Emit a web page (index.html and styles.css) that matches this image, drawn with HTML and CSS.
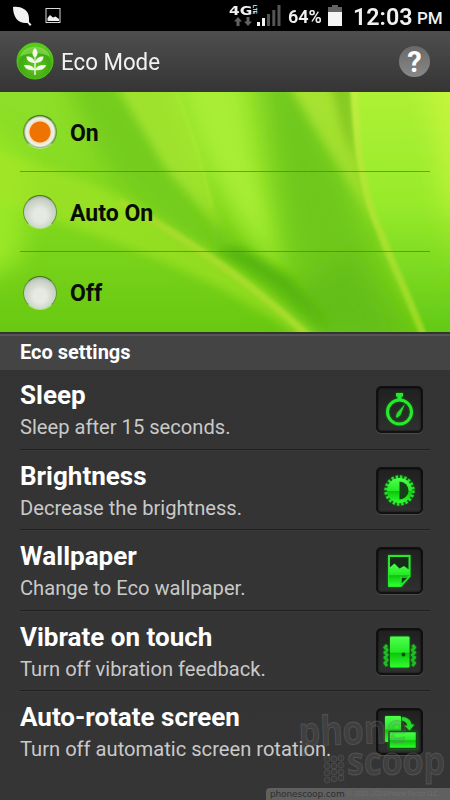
FILE: index.html
```html
<!DOCTYPE html>
<html lang="en">
<head>
<meta charset="utf-8">
<title>Eco Mode</title>
<link rel="stylesheet" href="styles.css">
</head>
<body>
<svg class="defs" width="0" height="0">
  <defs>
    <linearGradient id="neon" x1="0" y1="0" x2="0" y2="1"><stop offset="0" stop-color="#4dff4d"/><stop offset=".5" stop-color="#25ea25"/><stop offset=".54" stop-color="#0cc60c"/><stop offset="1" stop-color="#30ff30"/></linearGradient>
  </defs>
</svg>
<main class="screen">
  <header class="status">
    <svg class="leaf" width="22" height="22" viewBox="0 0 22 22"><path d="M2 2C9 1 16 4 17.500 10C18.300 14 18 15 18 17L20.500 19.500L19 21L16.500 18C8 19 2 13 2 2Z" fill="#f2f2f2"/></svg>
    <svg class="picture" width="16" height="17" viewBox="0 0 16 17"><rect x="1" y="1.500" width="14" height="14" fill="none" stroke="#d8d8d8"/><path d="M2.500 14V11L5 8L8 10.500L10.500 9.500L14 12V14Z" fill="#eee"/></svg>
    <div class="network">
      <span class="gen">4G</span><span class="lte">LTE</span>
      <svg class="arrows" width="18" height="10" viewBox="0 0 18 10"><path d="M4 0L8 4.500H5.500V9H2.500V4.500H0ZM12.500 0H15.500V4.500H18L14 9L10 4.500H12.500Z" fill="#626262"/></svg>
    </div>
    <svg class="signal" width="24" height="22" viewBox="0 0 24 22"><path d="M0 17H3V21H0ZM5 13H8V21H5Z" fill="#f4f4f4"/><path d="M10 9H13V21H10ZM15.300 5H18.300V21H15.300ZM20.500 0H23.500V21H20.500Z" fill="#555"/></svg>
    <span class="percent">64%</span>
    <svg class="battery" width="14" height="21" viewBox="0 0 14 21"><path d="M4 0H10V2H14V8H0V2H4Z" fill="#636363"/><path d="M0 7H14V21H0Z" fill="#f4f4f4"/></svg>
    <span class="clock">12:03</span><span class="pm">PM</span>
  </header>
  <nav class="bar">
    <svg class="logo" width="38" height="38" viewBox="0 0 38 38">
      <defs><radialGradient id="lg" cx=".5" cy=".65" r=".6"><stop offset="0" stop-color="#65c51e"/><stop offset=".7" stop-color="#3fab12"/><stop offset="1" stop-color="#56cf19"/></radialGradient></defs>
      <circle cx="19" cy="19" r="18" fill="url(#lg)" stroke="#55c81b"/>
      <path d="M4 15C7 1 31 1 34 15C27 10 11 10 4 15Z" fill="#b8ef78" opacity=".45"/>
      <path d="M19 6C22.500 9 22 13 19.500 15.500V20C20 16.500 23 14 27.500 14.500C27.500 18 25 20.500 19.700 21V27C21 23.500 25 22.500 30 23C29 27 25 28.800 19.700 28V33H18.300V28C13 28.800 9 27 8 23C13 22.500 17 23.500 18.300 27V21C13 20.500 10.500 18 10.500 14.500C15 14 18 16.500 18.500 20V15.500C16 13 15.500 9 19 6Z" fill="#f1faea"/>
    </svg>
    <h1 class="title">Eco Mode</h1>
    <span class="help">?</span>
  </nav>
  <section class="modes">
    <svg class="backdrop" width="450" height="240" viewBox="0 0 450 240" preserveAspectRatio="none">
      <defs>
        <linearGradient id="base" x1="0" y1="0" x2="0" y2="1"><stop offset="0" stop-color="#8edf29"/><stop offset=".5" stop-color="#82d91f"/><stop offset="1" stop-color="#68c811"/></linearGradient>
        <linearGradient id="right" x1="0" y1="0" x2="0" y2="1"><stop offset="0" stop-color="#b0f235"/><stop offset=".45" stop-color="#97ea2b"/><stop offset="1" stop-color="#5ac414"/></linearGradient>
        <linearGradient id="edge" x1="0" y1="0" x2="0" y2="1"><stop offset="0" stop-color="#c7f63f"/><stop offset=".5" stop-color="#b9f235"/><stop offset=".9" stop-color="#79d31a" stop-opacity="0"/></linearGradient>
        <linearGradient id="vein" x1="0" y1="0" x2="0" y2="1"><stop offset="0" stop-color="#c0ef40"/><stop offset="1" stop-color="#98d822"/></linearGradient>
        <linearGradient id="fold" x1="0" y1="0" x2="0" y2="1"><stop offset="0" stop-color="#a9e332"/><stop offset="1" stop-color="#8bd524"/></linearGradient>
        <filter id="b1" x="-50%" y="-50%" width="200%" height="200%"><feGaussianBlur stdDeviation="1.500"/></filter>
        <filter id="b4" x="-50%" y="-50%" width="200%" height="200%"><feGaussianBlur stdDeviation="5"/></filter>
        <filter id="b12" x="-50%" y="-50%" width="200%" height="200%"><feGaussianBlur stdDeviation="12"/></filter>
      </defs>
      <rect width="450" height="240" fill="url(#base)"/>
      <path d="M-20 30L30 70L20 170L-30 190Z" fill="#9ae826" filter="url(#b12)"/>
      <path d="M60 -20H115L175 65L235 170L190 165L110 85Z" fill="#74cc1a" filter="url(#b12)"/>
      <path d="M112 -15H172L198 60L222 140L165 75Z" fill="#9fe22e" filter="url(#b4)"/>
      <path d="M172 -25H240L258 70L285 190L240 130L200 60Z" fill="#a9ee36" filter="url(#b12)"/>
      <path d="M262 -20H292L345 85L405 250H315L285 130Z" fill="#70c71a" filter="url(#b12)"/>
      <path d="M190 95L225 165L300 250H410L350 160L285 205L230 150Z" fill="#60bd12" opacity=".8" filter="url(#b12)"/>
      <path d="M-10 60C60 75 110 95 180 140C240 178 270 198 325 250H305C220 185 130 155 -10 105Z" fill="#a5e526" opacity=".6" filter="url(#b4)"/>
      <path d="M215 158C245 175 280 198 332 238L290 185L240 155Z" fill="#56b50e" filter="url(#b4)"/>
      <path d="M120 110C180 143 245 185 308 244" fill="none" stroke="#a4dc29" stroke-width="7" filter="url(#b1)"/>
      <path d="M285 -15H350L360 80L383 160L425 250C400 160 340 80 285 -15Z" fill="url(#fold)" filter="url(#b4)"/>
      <path d="M330 -10H351L355 70L343 40Z" fill="#85c924" filter="url(#b4)"/>
      <path d="M351 -10H470V260H430L392 180L363 90Z" fill="url(#right)" filter="url(#b1)"/>
      <path d="M425 -30H480V240H460Z" fill="url(#edge)" filter="url(#b12)"/>
      <path d="M354 -5C357 50 360 85 373 122C387 160 405 195 424 245" fill="none" stroke="url(#vein)" stroke-width="7" filter="url(#b1)"/>
      <path d="M176 0Q198 55 212 115" fill="none" stroke="#bced3c" stroke-width="3" opacity=".3" filter="url(#b1)"/>
    </svg>
    <ul class="options">
      <li class="option"><span class="radio on"></span><span>On</span></li>
      <li class="option"><span class="radio"></span><span>Auto On</span></li>
      <li class="option"><span class="radio"></span><span>Off</span></li>
    </ul>
  </section>
  <h2 class="section">Eco settings</h2>
  <ul class="settings">
    <li class="row"><div class="copy"><h3>Sleep</h3><p>Sleep after 15 seconds.</p></div>
      <span class="tile"><svg width="46" height="46" viewBox="0 0 46 46"><circle cx="22.500" cy="25" r="12" fill="none" stroke="#25ec2a" stroke-width="3"/><path d="M19 6H26V9.500H24.500V13H20.500V9.500H19Z" fill="#25ec2a"/><path d="M28 17L23.500 28L20 31L18.800 29.500L20 26Z" fill="#22df28"/></svg></span></li>
    <li class="row"><div class="copy"><h3>Brightness</h3><p>Decrease the brightness.</p></div>
      <span class="tile"><svg width="46" height="46" viewBox="0 0 46 46"><circle cx="22.500" cy="22.500" r="13.200" fill="none" stroke="#25df2a" stroke-width="4" stroke-dasharray="2.400 1.747"/><circle cx="22.500" cy="22.500" r="12.500" fill="url(#neon)"/><path d="M22.500 13.500A9 9 0 0 1 22.500 31.500Z" fill="#164018"/></svg></span></li>
    <li class="row"><div class="copy"><h3>Wallpaper</h3><p>Change to Eco wallpaper.</p></div>
      <span class="tile"><svg width="46" height="46" viewBox="0 0 46 46"><path d="M12 8H32.500V28L24 38H12Z" fill="#172c18" stroke="#28e82b" stroke-width="2"/><path d="M12 20L17.500 15.500L22.500 20.500L27 18L32.500 22V28H24V38H12Z" fill="url(#neon)"/><path d="M24 37V29H32Z" fill="#133b14" stroke="#25e42a" stroke-width="1.500"/></svg></span></li>
    <li class="row"><div class="copy"><h3>Vibrate on touch</h3><p>Turn off vibration feedback.</p></div>
      <span class="tile"><svg width="46" height="46" viewBox="0 0 46 46"><rect x="13" y="7.500" width="19.500" height="31" rx="1" fill="url(#neon)"/><circle cx="26.500" cy="25.500" r="2" fill="#0b4b0d"/><path d="M10 16L8 18.500L10 21L8 23.500L10 26L8 28.500L10 31L8 34L10 37M35.500 16L37.500 18.500L35.500 21L37.500 23.500L35.500 26L37.500 28.500L35.500 31L37.500 34L35.500 37" fill="none" stroke="#1fbd25" stroke-width="3"/></svg></span></li>
    <li class="row"><div class="copy"><h3>Auto-rotate screen</h3><p>Turn off automatic screen rotation.</p></div>
      <span class="tile"><svg width="46" height="46" viewBox="0 0 46 46"><rect x="8" y="7" width="16" height="26" rx="1" fill="url(#neon)"/><rect x="12" y="22.500" width="27.500" height="17" rx="1" fill="url(#neon)" stroke="#124c13" stroke-width="1.500"/><path d="M25 8C31 8.500 34 11.500 34.500 15.500H37.500L32.500 21.500L27.500 16.500H30.500C30 14 28 12 25 11.500Z" fill="#27db2b"/></svg></span></li>
  </ul>
  <svg class="watermark" width="156" height="92" viewBox="0 0 156 92">
    <g class="brand"><text x="5" y="40" textLength="108" lengthAdjust="spacingAndGlyphs" transform="rotate(-2 5 40)">phone</text><text x="53" y="69" textLength="98" lengthAdjust="spacingAndGlyphs">scoop</text></g>
    <g class="keys"><circle cx="33" cy="53" r="3"/><circle cx="40" cy="53" r="3"/><circle cx="47" cy="52" r="3"/><circle cx="33" cy="60" r="3"/><circle cx="40" cy="60" r="3"/><circle cx="47" cy="59" r="3"/><circle cx="33" cy="67" r="3"/><circle cx="40" cy="66" r="3"/><circle cx="47" cy="66" r="3"/><circle cx="33" cy="74" r="3"/><circle cx="40" cy="73" r="3"/><circle cx="47" cy="72" r="3"/></g>
  </svg>
  <footer class="credit"><span class="site">phonescoop.com</span><span class="copyright">© 2001-2024 Phone Factor LLC</span></footer>
</main>
</body>
</html>
```
FILE: styles.css
```css
* { box-sizing: border-box; }
body, h1, h2, h3, p, ul { margin: 0; padding: 0; }
ul { list-style: none; }
body { background: #333; font-family: Roboto, "Liberation Sans", sans-serif; }
.defs { position: absolute; }
.screen { position: relative; width: 450px; height: 800px; overflow: hidden; background: linear-gradient(#323232, #353535); }

.status { display: flex; height: 31px; background: #000; color: #f1f1f1; white-space: nowrap; }
.leaf { margin: 5px 0 0 11px; }
.picture { margin: 7px 0 0 12px; }
.network { display: grid; grid-template-columns: 23px 5px; grid-template-rows: 11px 10px; width: 28px; margin: 5px 0 0 168px; }
.gen { font: 700 13px/12px "DejaVu Sans", sans-serif; transform: scaleX(1.18); transform-origin: left; }
.lte { font: 700 5px/5px "Liberation Sans", sans-serif; writing-mode: vertical-rl; }
.arrows { margin: 1px 0 0 5px; }
.signal { margin: 5px 0 0 0; }
.percent { width: 40px; margin-left: 7px; font-size: 19px; line-height: 33px; font-weight: 600; transform: scaleX(.95); transform-origin: left; }
.battery { margin: 5px 0 0 0; }
.clock { width: 60px; margin-left: 11px; font-size: 24px; line-height: 34px; font-weight: 600; transform: scaleX(.97); transform-origin: left; }
.pm { margin-left: 4px; font-size: 17px; line-height: 37px; font-weight: 500; }

.bar { display: flex; height: 61px; padding-left: 16px; background: linear-gradient(#4e4e4e, #353535); }
.logo { margin-top: 11px; }
.title { width: 338px; margin-left: 7px; font-size: 23px; font-weight: 400; line-height: 64px; color: #f2f2f2; transform: scaleX(.97); transform-origin: left; }
.help { width: 31px; height: 31px; margin-top: 15px; border-radius: 50%; background: linear-gradient(#696969, #888); color: #fff; font-size: 29px; font-weight: 700; line-height: 32px; text-align: center; }

.modes { position: relative; height: 240px; }
.backdrop { position: absolute; left: 0; top: 0; }
.options { position: relative; padding: 0 20px; }
.option { display: flex; align-items: center; height: 80px; padding: 1px 0 0 3px; border-bottom: 1px solid #3f870daa; font-size: 23px; font-weight: 700; color: #080d04; }
.option span + span { padding-top: 2px; }
.option:last-child { border: 0; }
.radio { width: 34px; height: 34px; margin-right: 13px; border: 1px solid #5f9a31; border-top-color: #3f741b; border-bottom-color: #afe37c; border-radius: 50%; background: radial-gradient(circle at 50% 60%, #e6eae3 0 25%, #c6cec2 65%, #66755f); }
.radio.on { background: radial-gradient(circle, #ee7300 0 10px, #f2e0c3 11px, #eef4e7 14px, #91a57f 16px); }

.section { height: 38px; padding-left: 20px; background: #444; border-top: 2px solid #333; box-shadow: inset 0 2px #555; color: #fff; font-size: 20px; line-height: 36px; font-weight: 700; white-space: nowrap; }
.settings { padding: 0 20px; }
.row { display: flex; justify-content: space-between; height: 80.6px; padding-right: 7px; border-bottom: 1px solid #202020; box-shadow: 0 1px #393939; position: relative; top: -1px; }
.row:last-child { border: 0; box-shadow: none; }
h3 { margin-top: 11px; font-size: 26px; line-height: 30px; color: #fff; white-space: nowrap; }
p { margin-top: 5px; font-size: 20.15px; line-height: 24px; color: #c9c9c9; white-space: nowrap; }
.tile { width: 47px; height: 47px; margin-top: 17px; border: 1px solid #111; border-radius: 5px; background: linear-gradient(#202020, #303030); box-shadow: inset 0 0 2px 1px #080808, 0 1px #4b4b4b; }
.tile svg { display: block; filter: drop-shadow(0 0 1px #0c8c0f); }

.watermark { position: absolute; left: 294px; top: 706px; }
.brand { font: 700 40px "Open Sans", sans-serif; fill: #70707030; stroke: #77777768; stroke-width: 1; }
.keys { fill: #66666620; stroke: #77777768; stroke-width: .7; }
.credit { position: absolute; left: 266px; top: 788px; width: 184px; height: 12px; padding-left: 4px; display: flex; gap: 5px; background: #606060; border-top-left-radius: 4px; font: 9px/12px "DejaVu Sans", sans-serif; white-space: nowrap; }
.site { width: 71px; color: #2f2f2f; letter-spacing: -.15px; }
.copyright { color: #6c6c6c; font-size: 7px; letter-spacing: -.65px; }
```
